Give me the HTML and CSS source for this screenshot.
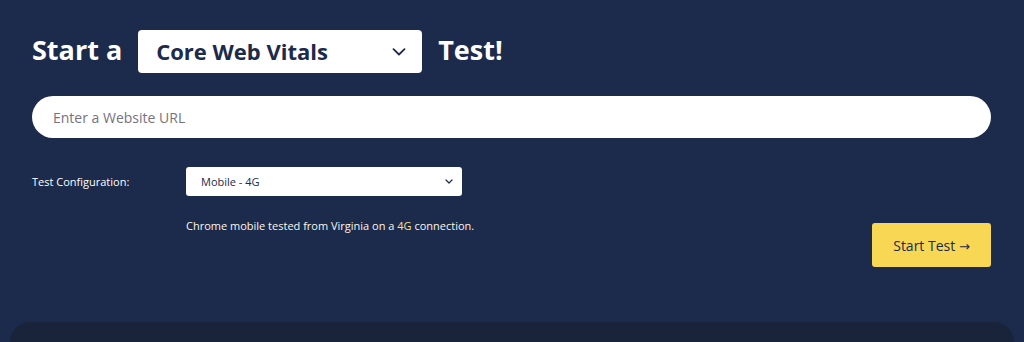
FILE: index.html
```html
<!DOCTYPE html>
<html lang="en">
<head>
<meta charset="utf-8">
<title>Start a Test</title>
<link rel="stylesheet" href="styles.css">
</head>
<body>
<main class="hero">
  <h1 class="title-row">
    <span class="title-text">Start a</span>
    <div class="test-select">
      <span>Core Web Vitals</span>
      <svg class="chev-lg" width="14" height="8" viewBox="0 0 14 8"><path d="M1.5 1.2 L7 6.5 L12.5 1.2" fill="none" stroke="#1c2a4b" stroke-width="1.8" stroke-linecap="round" stroke-linejoin="round"/></svg>
    </div>
    <span class="title-text">Test!</span>
  </h1>
  <input class="url-input" type="text" placeholder="Enter a Website URL">
  <div class="config-row">
    <label class="config-label">Test Configuration:</label>
    <div class="config-select">
      <span>Mobile - 4G</span>
      <svg width="8" height="5" viewBox="0 0 8 5"><path d="M1 1 L4 4 L7 1" fill="none" stroke="#1c2a4b" stroke-width="1.2" stroke-linecap="round" stroke-linejoin="round"/></svg>
    </div>
  </div>
  <div class="action-row">
    <p class="desc">Chrome mobile tested from Virginia on a <span class="hl">4G</span> connection.</p>
    <button class="start-btn">Start Test <span class="arrow">&#8594;</span></button>
  </div>
</main>
<section class="panel"></section>
</body>
</html>
```

FILE: styles.css
```css
* { box-sizing: border-box; }
html, body {
  margin: 0;
  padding: 0;
  background: #1c2a4b;
  font-family: "Open Sans", "Liberation Sans", sans-serif;
  height: 342px;
  overflow: hidden;
}
.hero {
  padding: 30px 33px 0 32px;
}
.title-row {
  display: flex;
  align-items: center;
  gap: 16px;
  margin: 0;
  height: 43px;
}
.title-text {
  color: #ffffff;
  font-size: 27px;
  font-weight: 700;
  line-height: 1;
  margin-top: -4px;
}
.test-select {
  display: flex;
  align-items: center;
  justify-content: space-between;
  width: 284px;
  height: 43px;
  background: #ffffff;
  border-radius: 4px;
  padding: 0 16px 0 18px;
  color: #1c2a4b;
  font-size: 22px;
  font-weight: 700;
}
.test-select span { margin-top: -1px; }
.url-input {
  display: block;
  width: 100%;
  height: 42px;
  margin-top: 23px;
  border: none;
  border-radius: 21px;
  background: #ffffff;
  padding: 0 21px;
  font-family: inherit;
  font-size: 14px;
  color: #333;
  outline: none;
}
.url-input::placeholder { color: #77727f; }
.config-row {
  display: flex;
  align-items: center;
  margin-top: 29px;
}
.config-label {
  width: 154px;
  color: #ffffff;
  font-size: 11px;
}
.config-select {
  display: flex;
  align-items: center;
  justify-content: space-between;
  width: 276px;
  height: 29px;
  background: #ffffff;
  border-radius: 3px;
  padding: 0 9px 0 15px;
  color: #1c2a4b;
  font-size: 11px;
}
.action-row {
  display: flex;
  align-items: flex-start;
  margin-top: 21px;
  padding-left: 154px;
}
.desc {
  margin: 0;
  color: #fbf7ec;
  font-size: 11px;
  line-height: 18px;
}
.hl { color: #f7e29a; }
.start-btn {
  margin-left: auto;
  margin-top: 6px;
  width: 119px;
  height: 44px;
  background: #f8d755;
  border: none;
  border-radius: 3px;
  color: #1c2a4b;
  font-family: inherit;
  font-size: 14px;
  padding: 0;
}
.arrow {
  font-family: "DejaVu Sans", sans-serif;
  font-size: 13px;
}
.panel {
  margin: 55px 10px 0;
  height: 20px;
  background: #19243a;
  border-radius: 26px 26px 0 0;
}
```
